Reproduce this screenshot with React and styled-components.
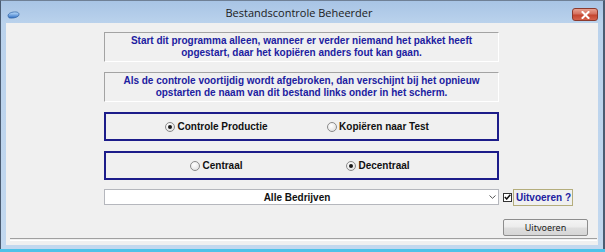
import styled, { createGlobalStyle } from "styled-components";

const GlobalStyle = createGlobalStyle`
  html, body {
    margin: 0;
    padding: 0;
    background: #4fc2e8;
  }
  body {
    width: 605px;
    height: 252px;
    overflow: hidden;
    font-family: "Liberation Sans", Arial, sans-serif;
  }
`;

const Desktop = styled.div`
  width: 605px;
  height: 252px;
  background: #4fc2e8;
`;

const Window = styled.div`
  height: 249px;
  box-sizing: border-box;
  border-left: 1px solid #4b5c72;
  border-right: 2px solid #4b5c72;
  border-top: 1px solid #6f8096;
  padding: 0 5px 4px 5px;
  background: linear-gradient(to bottom, #a8c4e5 0px, #bad2ec 22px, #c2d8ef 100%);
  display: flex;
  flex-direction: column;
`;

const TitleBar = styled.div`
  height: 22px;
  display: grid;
  grid-template-columns: 1fr auto 1fr;
  align-items: center;
`;

const AppIcon = styled.svg`
  width: 13px;
  height: 8px;
  margin-left: 1px;
  margin-top: 6px;
`;

const Title = styled.div`
  font-family: "Open Sans", "Noto Sans", sans-serif;
  font-size: 11px;
  color: #1b1b1b;
  margin-left: -6px;
`;

const CloseButton = styled.div`
  justify-self: end;
  align-self: start;
  margin-top: 7px;
  width: 26px;
  height: 13px;
  box-sizing: border-box;
  border: 1px solid #8b3a2e;
  border-radius: 3px;
  background: linear-gradient(to bottom, #e9a191 0%, #d5705e 45%, #c4452f 55%, #d5624c 100%);
  display: flex;
  align-items: center;
  justify-content: center;
`;

const Client = styled.div`
  height: 222px;
  background: #f0f0f0;
  display: flex;
  flex-direction: column;
  padding-top: 9px;
  box-sizing: border-box;
`;

const Stack = styled.div`
  margin-left: 98px;
  width: 395px;
  display: flex;
  flex-direction: column;
  gap: 10px;
`;

const InfoBox = styled.div`
  height: 30px;
  box-sizing: border-box;
  border-top: 1px solid #a3a3a3;
  border-left: 1px solid #a3a3a3;
  border-right: 1px solid #ffffff;
  border-bottom: 1px solid #ffffff;
  display: flex;
  align-items: center;
  justify-content: center;
  text-align: center;
  font-weight: bold;
  font-size: 10px;
  line-height: 12px;
  color: #2020a0;
`;

const RadioBox = styled.div`
  height: 29px;
  box-sizing: border-box;
  border: 2px solid #1c1c8a;
  display: grid;
  grid-template-columns: 221px 102px;
  justify-items: center;
  align-items: center;
`;

const RadioLabel = styled.label`
  display: flex;
  align-items: center;
  gap: 2px;
  font-size: 10px;
  font-weight: bold;
  color: #111;
  white-space: nowrap;
`;

const RadioCircle = styled.span`
  width: 10px;
  height: 10px;
  box-sizing: border-box;
  border-radius: 50%;
  border: 1px solid #8a8a8a;
  background: radial-gradient(circle at 40% 35%, #ffffff 0%, #e6e6e6 70%, #d4d4d4 100%);
  display: flex;
  align-items: center;
  justify-content: center;

  &::after {
    content: "";
    width: 4px;
    height: 4px;
    border-radius: 50%;
    background: #1a1a1a;
    display: ${(p) => (p.$checked ? "block" : "none")};
  }
`;

const ControlRow = styled.div`
  margin: 9px 0 0 98px;
  display: flex;
  align-items: center;
  height: 16px;
`;

const Combo = styled.div`
  width: 395px;
  height: 16px;
  box-sizing: border-box;
  border: 1px solid #b5b7bd;
  background: #ffffff;
  display: grid;
  grid-template-columns: 1fr auto;
  align-items: center;
  padding-right: 2px;
  font-size: 10px;
  font-weight: bold;
  color: #111;
`;

const ComboText = styled.span`
  text-align: center;
`;

const Check = styled.span`
  width: 9px;
  height: 9px;
  box-sizing: border-box;
  margin-left: 4px;
  border: 1px solid #333;
  background: #fff;
  display: flex;
  align-items: center;
  justify-content: center;
`;

const CheckLabel = styled.span`
  margin-left: 1px;
  height: 17px;
  box-sizing: border-box;
  padding: 0 1px 0 2px;
  border: 1px solid #b4ad7c;
  display: flex;
  align-items: center;
  font-size: 10px;
  font-weight: bold;
  color: #2020a0;
`;

const ButtonRow = styled.div`
  margin-top: 14px;
  display: flex;
  justify-content: flex-end;
  padding-right: 10px;
`;

const Button = styled.button`
  width: 85px;
  height: 17px;
  box-sizing: border-box;
  padding: 0;
  border: 1px solid #8d8d8d;
  border-radius: 2px;
  background: linear-gradient(to bottom, #f4f4f4 0%, #ececec 48%, #dedede 52%, #d6d6d6 100%);
  font-family: "Noto Sans", "Open Sans", sans-serif;
  font-size: 9px;
  color: #222;
`;

const Separator = styled.div`
  margin: 2px 1px 0 4px;
  height: 1px;
  border-top: 1px solid #a0a0a0;
  border-bottom: 1px solid #ffffff;
`;

function Radio({ checked, children }) {
  return (
    <RadioLabel>
      <RadioCircle $checked={checked} />
      {children}
    </RadioLabel>
  );
}

export default function App() {
  return (
    <Desktop>
      <GlobalStyle />
      <Window>
        <TitleBar>
          <AppIcon viewBox="0 0 13 8">
            <defs>
              <linearGradient id="ic" x1="0" y1="0" x2="0" y2="1">
                <stop offset="0" stopColor="#bfe0ff" />
                <stop offset="1" stopColor="#2f6fc4" />
              </linearGradient>
            </defs>
            <path d="M1 5 C1 2 5 0.8 9 1 C12 1.2 12.5 3 11.5 4.8 C10 7 4 7.5 2 6.8 Z" fill="url(#ic)" stroke="#3568a8" strokeWidth="0.8" />
          </AppIcon>
          <Title>Bestandscontrole Beheerder</Title>
          <CloseButton>
            <svg width="9" height="8" viewBox="0 0 9 8">
              <path d="M1.5 1 L7.5 7 M7.5 1 L1.5 7" stroke="#fff" strokeWidth="2" strokeLinecap="square" />
            </svg>
          </CloseButton>
        </TitleBar>
        <Client>
          <Stack>
            <InfoBox>
              Start dit programma alleen, wanneer er verder niemand het pakket heeft
              <br />
              opgestart, daar het kopiëren anders fout kan gaan.
            </InfoBox>
            <InfoBox>
              Als de controle voortijdig wordt afgebroken, dan verschijnt bij het opnieuw
              <br />
              opstarten de naam van dit bestand links onder in het scherm.
            </InfoBox>
            <RadioBox>
              <Radio checked>Controle Productie</Radio>
              <Radio>Kopiëren naar Test</Radio>
            </RadioBox>
            <RadioBox>
              <Radio>Centraal</Radio>
              <Radio checked>Decentraal</Radio>
            </RadioBox>
          </Stack>
          <ControlRow>
            <Combo>
              <ComboText>Alle Bedrijven</ComboText>
              <svg width="7" height="4" viewBox="0 0 7 4">
                <path d="M0.5 0.5 L3.5 3.3 L6.5 0.5" fill="none" stroke="#555" strokeWidth="1" />
              </svg>
            </Combo>
            <Check>
              <svg width="7" height="6" viewBox="0 0 7 6">
                <path d="M0.8 3 L2.7 5 L6.3 0.8" fill="none" stroke="#111" strokeWidth="1.5" />
              </svg>
            </Check>
            <CheckLabel>Uitvoeren ?</CheckLabel>
          </ControlRow>
          <ButtonRow>
            <Button>Uitvoeren</Button>
          </ButtonRow>
          <Separator />
        </Client>
      </Window>
    </Desktop>
  );
}
